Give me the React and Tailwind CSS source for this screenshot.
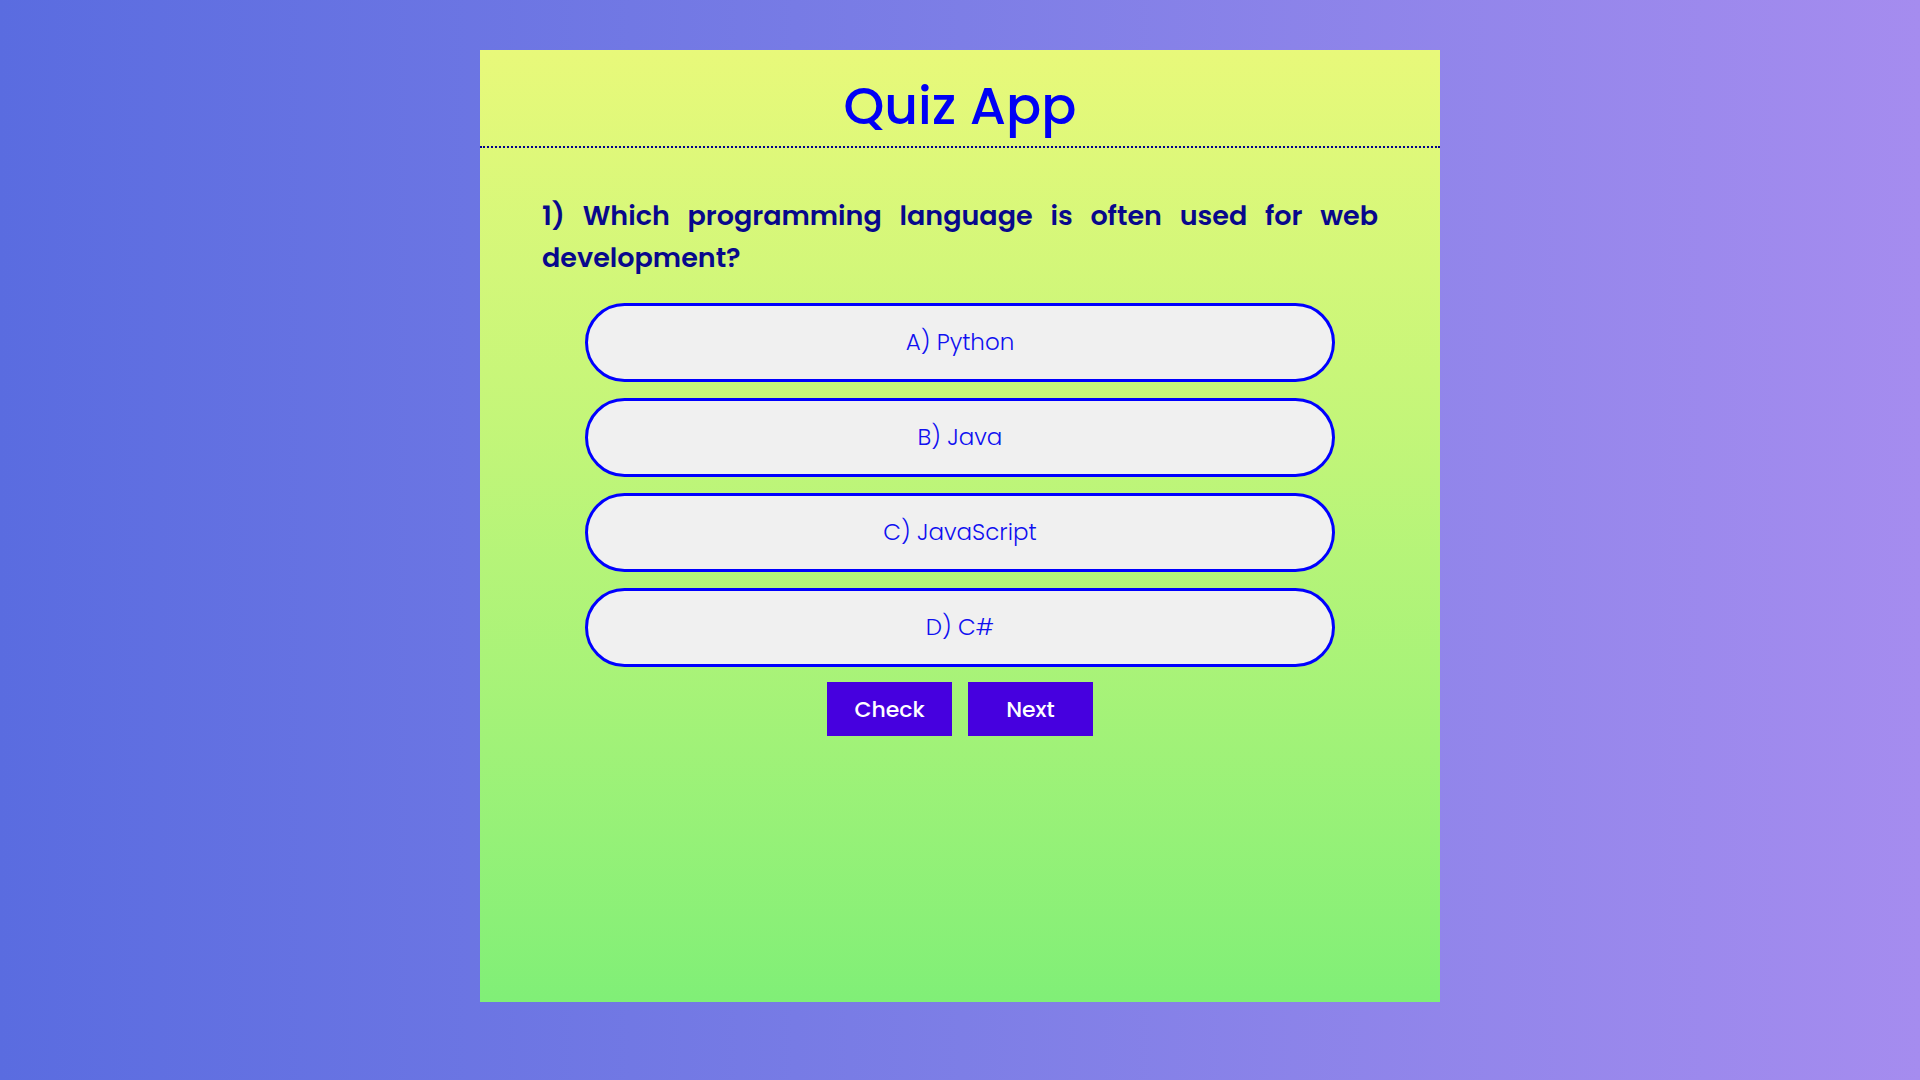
import React from 'react'

const options = ['A) Python', 'B) Java', 'C) JavaScript', 'D) C#']

export default function App() {
  return (
    <div
      className="min-h-screen w-full bg-gradient-to-r from-[#5a6ce0] via-[#7d7ee6] to-[#a58cef] pt-[50px]"
      style={{ fontFamily: "Poppins, 'Open Sans', Lato, sans-serif" }}
    >
      <div className="mx-auto flex h-[952px] w-[960px] flex-col bg-gradient-to-b from-[#e8f97a] to-[#80ef77]">
        <div className="flex h-[98px] items-center justify-center border-b-2 border-dotted border-[#00008b] pt-[16px]">
          <h1 className="text-[52px] font-medium leading-none text-[#0000f5]">Quiz App</h1>
        </div>

        <div className="px-[62px] pt-[47px]">
          <p className="text-justify text-[27px] font-semibold leading-[42px] text-[#08088c]">
            1) Which programming language is often used for web development?
          </p>
        </div>

        <div className="mt-[24px] flex flex-col items-center gap-4">
          {options.map((o) => (
            <button
              key={o}
              className="h-[79px] w-[750px] rounded-full border-[3px] border-[#0000ff] bg-[#f0f0f0] text-[23px] font-light text-[#1010f0]"
            >
              {o}
            </button>
          ))}
        </div>

        <div className="mt-[15px] flex justify-center gap-4">
          <button className="h-[54px] w-[125px] bg-[#4600df] text-[22px] font-medium text-white">
            Check
          </button>
          <button className="h-[54px] w-[125px] bg-[#4600df] text-[22px] font-medium text-white">
            Next
          </button>
        </div>
      </div>
    </div>
  )
}
